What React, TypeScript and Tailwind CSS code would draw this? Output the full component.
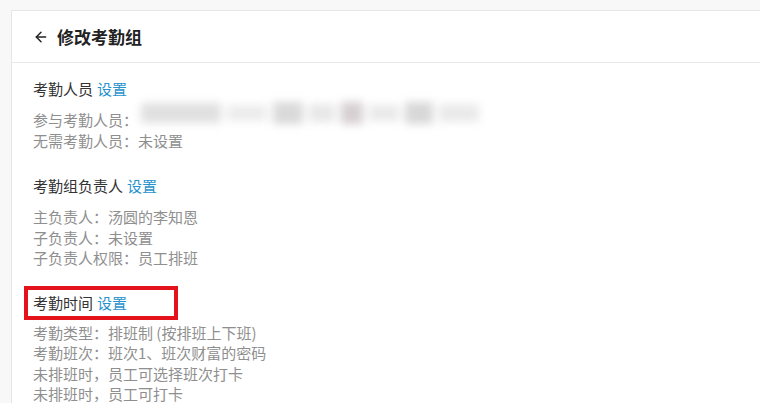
import React from 'react';
import { ArrowLeft } from 'lucide-react';

const font = { fontFamily: '"Noto Sans CJK SC", "Noto Sans", sans-serif' };

const SectionTitle: React.FC<{ label: string }> = ({ label }) => (
  <div className="text-[15px] leading-[20px] text-[#333]">
    {label}<span className="ml-[4px] text-[#2892cc]">设置</span>
  </div>
);

const Lines: React.FC<{ items: React.ReactNode[] }> = ({ items }) => (
  <div className="text-[15px] leading-[20.5px] text-[#8f8f8f]">
    {items.map((it, i) => (
      <div key={i} className="relative">{it}</div>
    ))}
  </div>
);

// blurred redaction over the member list
const Redacted = () => (
  <div className="absolute left-[108px] top-[-12px] w-[345px] h-[30px] blur-[4px] opacity-75 flex items-center gap-[6px]">
    <span className="h-[20px] w-[80px] bg-[#d6d6d6]" />
    <span className="h-[16px] w-[40px] bg-[#e6e6e6]" />
    <span className="h-[22px] w-[30px] bg-[#cdcdcd]" />
    <span className="h-[18px] w-[26px] bg-[#e0e0e0]" />
    <span className="h-[22px] w-[22px] bg-[#c9bfc3]" />
    <span className="h-[16px] w-[30px] bg-[#e2e2e2]" />
    <span className="h-[22px] w-[28px] bg-[#cbcbcb]" />
    <span className="h-[18px] w-[40px] bg-[#e3e3e3]" />
  </div>
);

export default function App() {
  return (
    <div style={font} className="w-[760px] h-[403px] overflow-hidden bg-[#f8f8f8] pt-[10px] pl-[11px]">
      <div className="h-full bg-white border-l border-t border-[#e6e6e6]">
        <div className="h-[52px] flex items-center pl-[21px] border-b border-[#e8e8e8]">
          <ArrowLeft size={16} strokeWidth={2.2} className="text-[#222] mt-[1px]" />
          <span className="ml-[8px] text-[17px] font-bold text-[#222] leading-none">修改考勤组</span>
        </div>

        <div className="pl-[21px] pt-[16px]">
          <SectionTitle label="考勤人员" />
          <div className="mt-[11px]">
            <Lines
              items={[
                <>参与考勤人员：<Redacted /></>,
                '无需考勤人员：未设置',
              ]}
            />
          </div>

          <div className="mt-[25px]">
            <SectionTitle label="考勤组负责人" />
          </div>
          <div className="mt-[11px]">
            <Lines items={['主负责人：汤圆的李知恩', '子负责人：未设置', '子负责人权限：员工排班']} />
          </div>

          <div className="mt-[17px] -ml-[9px] w-[154px] border-4 border-[#e3121b] pl-[5px] py-[3px]">
            <SectionTitle label="考勤时间" />
          </div>
          <div className="mt-[3px]">
            <Lines
              items={[
                '考勤类型：排班制 (按排班上下班)',
                '考勤班次：班次1、班次财富的密码',
                '未排班时，员工可选择班次打卡',
                '未排班时，员工可打卡',
              ]}
            />
          </div>
        </div>
      </div>
    </div>
  );
}
